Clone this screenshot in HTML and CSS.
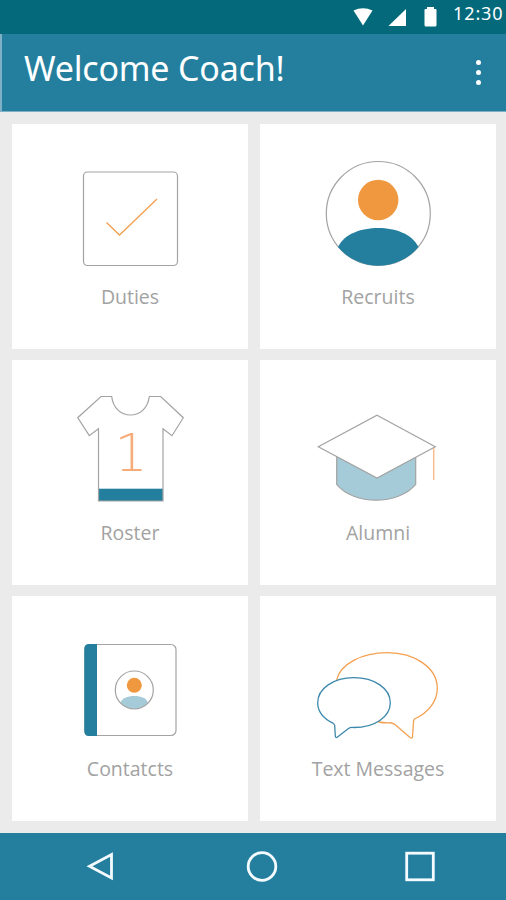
FILE: index.html
```
<!DOCTYPE html>
<html lang="en">

<head>
    <meta charset="UTF-8">
    <meta name="viewport" content="width=device-width, initial-scale=1.0">
    <title>Welcome Coach!</title>
    <link rel="stylesheet" href="styles.css">
</head>

<body>
    <div class="status-bar">
        <svg class="status-icons" width="90" height="34" viewBox="0 0 90 34">
            <path d="M3.500 10.500Q13 6 22.500 10.500L13 25.500Z" />
            <path d="M38.500 26H56V9Z" />
            <path d="M77 7h7v2h1.500q1 0 1 1v15q0 1.500-1.500 1.500h-9q-1.500 0-1.500-1.500v-15q0-1 1-1H77z" />
        </svg>
        <span class="clock">12:30</span>
    </div>

    <header class="app-bar">
        <h1>Welcome Coach!</h1>
        <div class="menu"><i></i><i></i><i></i></div>
    </header>

    <main class="grid">
        <a class="card">
            <svg class="icon" viewBox="0 0 130 125">
                <rect class="gray" x="18.500" y="18" width="94" height="93.500" rx="4" />
                <path class="orange" d="M41.500 68.500L54.500 81L92 45" />
            </svg>
            <span class="label">Duties</span>
        </a>
        <a class="card">
            <svg class="icon" viewBox="0 0 130 125">
                <circle class="gray" cx="65.300" cy="59.500" r="52" />
                <circle class="fill-orange" cx="65.200" cy="46" r="20.200" />
                <path class="fill-blue" d="M25 93C31 80 48 74 65.300 74S99 80 105.500 93A52.500 52.500 0 0 1 25 93Z" />
            </svg>
            <span class="label">Recruits</span>
        </a>
        <a class="card">
            <svg class="icon" viewBox="0 0 130 125">
                <rect class="fill-blue" x="33.500" y="98.700" width="64.500" height="12.300" />
                <path class="gray" d="M36 6.500H46.700C48 18 56 25 65.500 25S83 18 84.300 6.500H95.700L118.300 27.700L107 45.700L98 38.700V111H33.500V38.700L24.300 45.700L12.700 27.700Z" />
                <text class="number" x="66" y="81">1</text>
            </svg>
            <span class="label">Roster</span>
        </a>
        <a class="card">
            <svg class="icon" viewBox="0 0 130 125">
                <path class="gray fill-light" d="M23.700 60V94.300C41 115.500 85 115.500 102.700 94.300V60Z" />
                <path class="gray fill-white" d="M64 25.300L122.300 56.700L64 88L5.300 56.700Z" />
                <path class="orange tassel" d="M120.700 58V90" />
            </svg>
            <span class="label">Alumni</span>
        </a>
        <a class="card">
            <svg class="icon" viewBox="0 0 130 125">
                <rect class="gray" x="19.800" y="18.500" width="91.200" height="91" rx="5" />
                <path class="fill-blue" d="M32 18H24Q19.300 18 19.300 23V105Q19.300 110 24 110H32Z" />
                <path class="fill-light" d="M55.500 77C57 72 62 70 69.300 70S81.500 72 83 77A19 19 0 0 1 55.500 77Z" />
                <circle class="gray" cx="69.300" cy="64" r="19" />
                <circle class="fill-orange" cx="69.300" cy="59.300" r="7.500" />
            </svg>
            <span class="label">Contatcts</span>
        </a>
        <a class="card">
            <svg class="icon" viewBox="0 0 130 125">
                <path class="orange" d="M23.700 54C27 38 49 26.700 74.300 26.700C102 26.700 124.300 42 124.300 62.300C124.300 75 116 86.500 101.500 93Q100.500 94 100.500 96L99.500 111Q99 113 97 111.500L82 98.500Q79 96.500 76 96.800Q71 97 65.300 96" />
                <path class="blue" d="M21.700 99.500Q21.500 98 20 97.200C10.500 92.500 4.700 85.500 4.700 76.700C4.700 62.500 20.500 51.700 41 51.700S77.300 62.500 77.300 76.700S61.500 101.500 41 101.500Q37.500 101 35.500 102.500L24.500 111Q22.500 112.500 22.300 110Z" />
            </svg>
            <span class="label">Text Messages</span>
        </a>
    </main>

    <nav class="nav-bar">
        <svg width="36" height="36" viewBox="0 0 36 36">
            <path d="M30.500 6.500V30L8.500 18.200Z" />
        </svg>
        <svg width="36" height="36" viewBox="0 0 36 36">
            <circle cx="20" cy="18.500" r="13.800" />
        </svg>
        <svg width="36" height="36" viewBox="0 0 36 36">
            <rect x="4.700" y="5.200" width="26.600" height="26.600" />
        </svg>
    </nav>
</body>

</html>
```

FILE: styles.css
```
body {
    font-family: "Noto Sans", "Open Sans", sans-serif;
    margin: 0;
    padding: 0;
    background-color: #ebebeb;
}

.status-bar {
    display: flex;
    justify-content: flex-end;
    height: 34px;
    background-color: #046a7b;
    color: white;
}

.status-icons {
    fill: white;
    margin-right: 13px;
}

.clock {
    width: 53px;
    font-size: 18px;
    line-height: 27px;
    letter-spacing: 0.9px;
    white-space: nowrap;
}

.app-bar {
    display: flex;
    justify-content: space-between;
    box-sizing: border-box;
    height: 78px;
    padding: 0 25px 0 22px;
    background-color: #247f9f;
    border-left: 2px solid #7fb0c8;
    border-bottom: 1px solid #7fb0c8;
}

.app-bar h1 {
    margin: 0;
    color: white;
    font-size: 34px;
    font-weight: 400;
    line-height: 69px;
    letter-spacing: -0.2px;
}

.menu {
    display: flex;
    flex-direction: column;
    gap: 5px;
    padding-top: 26px;
}

.menu i {
    width: 5px;
    height: 5px;
    border-radius: 50%;
    background-color: white;
}

.grid {
    display: grid;
    grid-template-columns: 236px 236px;
    grid-auto-rows: 225px;
    gap: 11px 12px;
    padding: 12px 10px 12px 12px;
}

.card {
    display: flex;
    flex-direction: column;
    align-items: center;
    box-sizing: border-box;
    padding-top: 30px;
    background-color: white;
}

.icon {
    width: 130px;
    height: 125px;
    fill: none;
}

.label {
    color: #a2a2a2;
    font-family: "Open Sans", "Noto Sans", sans-serif;
    font-size: 19.5px;
    line-height: 36px;
}

/* icon colours */
.gray {
    stroke: #a3a3a3;
    stroke-width: 1.2;
}

.orange {
    stroke: #f3a050;
    stroke-width: 1.3;
}

.blue {
    stroke: #3c88ab;
    stroke-width: 1.3;
    fill: white;
}

.tassel {
    stroke: #f8bd91;
    stroke-width: 1.5;
}

.fill-orange {
    fill: #f09840;
}

.fill-blue {
    fill: #247f9f;
}

.fill-light {
    fill: #a6cbd8;
}

.fill-white {
    fill: white;
}

.number {
    fill: #f5ac78;
    font-family: "DejaVu Sans Light", "DejaVu Sans ExtraLight", "DejaVu Sans", sans-serif;
    font-size: 52px;
    font-weight: 200;
    text-anchor: middle;
}

.nav-bar {
    display: flex;
    justify-content: space-between;
    box-sizing: border-box;
    height: 67px;
    padding: 15px 68px 0 81px;
    background-color: #247f9f;
}

.nav-bar svg {
    fill: none;
    stroke: #f4fbff;
    stroke-width: 2.8;
}
```
